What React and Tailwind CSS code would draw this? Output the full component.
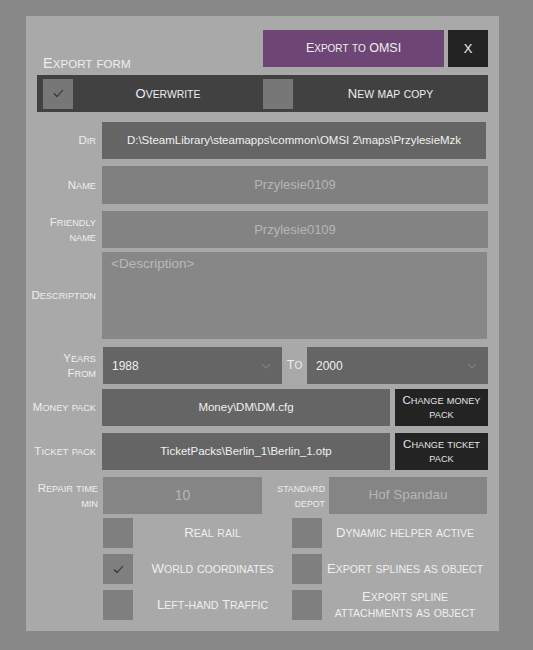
import React from 'react'

const font = { fontFamily: '"Liberation Sans", Arial, sans-serif' }

// small caps the way the game UI draws them: lowercase runs set as smaller capitals
function SC({ text }) {
  return (
    <span>
      {text.split(/([a-z]+)/).map((p, i) =>
        /^[a-z]+$/.test(p) ? (
          <span key={i} className="text-[0.8em] uppercase">{p}</span>
        ) : (
          p
        )
      )}
    </span>
  )
}

function Check() {
  return (
    <svg width="11" height="9" viewBox="0 0 11 9" fill="none">
      <path d="M1 4.5 L4 7.5 L10 1" stroke="#2e2e2e" strokeWidth="1.1" />
    </svg>
  )
}

function Box({ checked, className = 'bg-[#7f7f7f]' }) {
  return (
    <div className={`w-[30px] h-[30px] shrink-0 flex items-center justify-center ${className}`}>
      {checked ? <Check /> : null}
    </div>
  )
}

function Label({ lines, className = '' }) {
  return (
    <div className={`w-[65px] shrink-0 flex justify-end pr-[6px] text-[11.5px] leading-[14px] text-[#eeeeee] text-right whitespace-nowrap ${className}`}>
      <div>
        {lines.map((l, i) => (
          <div key={i}>
            <SC text={l} />
          </div>
        ))}
      </div>
    </div>
  )
}

function Chevron() {
  return (
    <svg width="10" height="6" viewBox="0 0 10 6" fill="none" className="absolute right-[11px] top-[16px]">
      <path d="M1 1 L5 5 L9 1" stroke="#7c7c7c" strokeWidth="1.4" />
    </svg>
  )
}

function CheckRow({ left, leftChecked, right, rightChecked, mt }) {
  return (
    <div className={`flex items-center h-[30px] ${mt}`}>
      <div className="w-[66px] shrink-0" />
      <Box checked={leftChecked} />
      <div className="w-[159px] text-center text-[13.2px] leading-[15px] text-[#efefef]">
        <SC text={left} />
      </div>
      <Box checked={rightChecked} />
      <div className="flex-1 text-center text-[13.2px] leading-[15px] text-[#efefef]">
        {right.map((l, i) => (
          <div key={i}>
            <SC text={l} />
          </div>
        ))}
      </div>
    </div>
  )
}

export default function App() {
  return (
    <div className="w-[533px] h-[650px] bg-[#888888] pt-[16px] pl-[26px]" style={font}>
      <div className="w-[473px] h-[615px] bg-[#a9a9a9] px-[11px] pt-[14px]">
        <div className="flex items-end">
          <div className="flex-1 pl-[6px] mb-[-4px] text-[14.5px] leading-[14px] text-[#eeeeee]">
            <SC text="Export form" />
          </div>
          <div className="w-[181px] h-[37px] bg-[#6e4675] flex items-center justify-center text-[12.5px] text-[#eeeeee]">
            <SC text="Export to OMSI" />
          </div>
          <div className="w-[40px] h-[37px] ml-[4px] bg-[#232323] flex items-center justify-center text-[13px] text-[#eeeeee]">
            X
          </div>
        </div>

        <div className="mt-[8px] h-[37px] bg-[#414141] flex items-center pl-[6px]">
          <Box checked className="bg-[#777777]" />
          <div className="w-[190px] text-center text-[13px] text-[#eeeeee]">
            <SC text="Overwrite" />
          </div>
          <Box className="bg-[#777777]" />
          <div className="flex-1 text-center text-[13px] text-[#eeeeee]">
            <SC text="New map copy" />
          </div>
        </div>

        <div className="mt-[10px] flex items-center h-[37px]">
          <Label lines={['Dir']} />
          <div className="flex-1 mr-[2px] h-full bg-[#656565] flex items-center justify-center text-[11.5px] text-[#f0f0f0]">
            D:\SteamLibrary\steamapps\common\OMSI 2\maps\PrzylesieMzk
          </div>
        </div>

        <div className="mt-[7px] flex items-center h-[38px]">
          <Label lines={['Name']} />
          <div className="flex-1 h-full bg-[#808080] flex items-center justify-center text-[13px] text-[#b6b6b6]">
            Przylesie0109
          </div>
        </div>

        <div className="mt-[7px] flex items-center h-[37px]">
          <Label lines={['Friendly', 'name']} />
          <div className="flex-1 h-full bg-[#838383] flex items-center justify-center text-[13px] text-[#b6b6b6]">
            Przylesie0109
          </div>
        </div>

        <div className="mt-[4px] flex items-center h-[87px]">
          <Label lines={['Description']} />
          <div className="flex-1 mr-[1px] h-full bg-[#878787] px-[9px] pt-[3px] text-[13.5px] leading-[17px] text-[#bababa]">
            &lt;Description&gt;
          </div>
        </div>

        <div className="mt-[8px] flex items-center h-[37px]">
          <Label lines={['Years', 'From']} />
          <div className="relative w-[179px] ml-[1px] h-full bg-[#656565] flex items-center pl-[9px] text-[12px] text-[#f0f0f0]">
            1988
            <Chevron />
          </div>
          <div className="w-[25px] text-center text-[12.5px] text-[#eeeeee]">
            <SC text="To" />
          </div>
          <div className="relative flex-1 h-full bg-[#656565] flex items-center pl-[9px] text-[12px] text-[#f0f0f0]">
            2000
            <Chevron />
          </div>
        </div>

        <div className="mt-[5px] flex items-center h-[37px]">
          <Label lines={['Money pack']} />
          <div className="w-[288px] h-full bg-[#656565] flex items-center justify-center text-[11.5px] text-[#f0f0f0]">
            Money\DM\DM.cfg
          </div>
          <div className="flex-1 ml-[5px] h-full bg-[#232323] flex flex-col items-center justify-center text-center text-[11.5px] leading-[13px] text-[#e4e4e4]">
            <div><SC text="Change money" /></div>
            <div><SC text="pack" /></div>
          </div>
        </div>

        <div className="mt-[7px] flex items-center h-[37px]">
          <Label lines={['Ticket pack']} />
          <div className="w-[288px] h-full bg-[#656565] flex items-center justify-center text-[11.5px] text-[#f0f0f0]">
            TicketPacks\Berlin_1\Berlin_1.otp
          </div>
          <div className="flex-1 ml-[5px] h-full bg-[#232323] flex flex-col items-center justify-center text-center text-[11.5px] leading-[13px] text-[#e4e4e4]">
            <div><SC text="Change ticket" /></div>
            <div><SC text="pack" /></div>
          </div>
        </div>

        <div className="mt-[7px] flex items-center h-[37px]">
          <Label lines={['Repair time', 'min']} className="!pr-[4px]" />
          <div className="w-[159px] ml-[1px] h-full bg-[#858585] flex items-center justify-center text-[14px] text-[#b6b6b6]">
            10
          </div>
          <div className="w-[67px] flex justify-end pr-[4px] text-right text-[11px] leading-[14px] text-[#eeeeee]">
            <div>
              <div><SC text="standard" /></div>
              <div><SC text="depot" /></div>
            </div>
          </div>
          <div className="flex-1 mr-[1px] h-full bg-[#858585] flex items-center justify-center text-[13.5px] text-[#b6b6b6]">
            Hof Spandau
          </div>
        </div>

        <CheckRow mt="mt-[4px]" left="Real rail" right={['Dynamic helper active']} />
        <CheckRow mt="mt-[6px]" left="World coordinates" leftChecked right={['Export splines as object']} />
        <CheckRow mt="mt-[6px]" left="Left-hand Traffic" right={['Export spline', 'attachments as object']} />
      </div>
    </div>
  )
}
